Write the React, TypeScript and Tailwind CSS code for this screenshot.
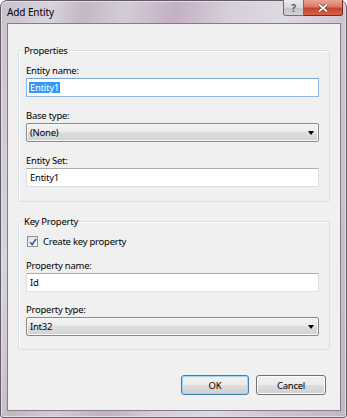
import React from 'react';

const font = "font-['Noto_Sans','Open_Sans',sans-serif] text-[9.5px] leading-[13px] tracking-[-0.25px] text-black";

function TextBox({ value, focused, selected }: { value: string; focused?: boolean; selected?: boolean }) {
  return (
    <div
      className={`h-[19px] flex items-center pl-[2px] bg-white border ${
        focused
          ? 'border-[#8fb8e2] border-t-[#7aa7d6]'
          : 'border-[#dcdfe3] border-t-[#abadb3]'
      }`}
    >
      {selected ? (
        <span className="bg-[#3399ff] text-white px-[1px] leading-[11px]">{value}</span>
      ) : (
        <span className="px-[1px]">{value}</span>
      )}
    </div>
  );
}

function ComboBox({ value }: { value: string }) {
  return (
    <div className="h-[19px] flex items-center justify-between pl-[3px] pr-[4px] rounded-[2px] border border-[#8a8a8a] bg-[linear-gradient(180deg,#f4f4f4_0%,#ebebeb_45%,#dddddd_50%,#d2d2d2_100%)] shadow-[inset_0_0_0_1px_#f8f8f8]">
      <span>{value}</span>
      <svg width="6" height="4" viewBox="0 0 6 4">
        <path d="M0 0h6L3 4z" fill="#000" />
      </svg>
    </div>
  );
}

function Field({ label, children, className = '' }: { label: string; children: React.ReactNode; className?: string }) {
  return (
    <div className={className}>
      <div className="mb-[1px]">{label}</div>
      {children}
    </div>
  );
}

function GroupBox({ title, children, className = '' }: { title: string; children: React.ReactNode; className?: string }) {
  return (
    <div className={`relative rounded-[3px] border border-[#d5dfe5] shadow-[inset_1px_1px_0_#ffffff] ${className}`}>
      <span className="absolute -top-[7px] left-[4px] px-[1px] bg-[#f0f0f0]">{title}</span>
      {children}
    </div>
  );
}

function Button({ label, isDefault, width }: { label: string; isDefault?: boolean; width: string }) {
  return (
    <button
      className={`${width} h-[20px] rounded-[3px] border ${
        isDefault ? 'border-[#3c7fb1] shadow-[inset_0_0_0_1px_#9fd5f3]' : 'border-[#707070] shadow-[inset_0_0_0_1px_#fcfcfc]'
      } bg-[linear-gradient(180deg,#f2f2f2_0%,#ebebeb_48%,#dddddd_52%,#cfcfcf_100%)] flex items-center justify-center`}
    >
      {label}
    </button>
  );
}

export default function App() {
  return (
    <div className={`w-[347px] h-[418px] ${font}`}>
      <div className="w-full h-full flex flex-col pl-[6px] pr-[5px] pb-[6px] rounded-t-[7px] rounded-b-[3px] border border-[#625c68] bg-[linear-gradient(100deg,#c9c1cc_0%,#d9d4db_12%,#c3b8c6_20%,#d3ccd6_30%,#c4afc6_42%,#d6cfd8_55%,#dfd9e1_68%,#cfc6d2_82%,#c2b7c5_100%)] shadow-[inset_0_0_0_1px_#e3dee6]">
        <div className="h-[22px] flex items-start">
          <span className="self-center text-[10px] pt-[1px] tracking-[-0.1px]">Add Entity</span>
          <div className="flex-1" />
          <div className="flex -mt-[1px] -mr-[2px]">
            <div className="w-[21px] h-[16px] rounded-bl-[3px] border border-[#6f6d75] border-t-0 bg-[linear-gradient(180deg,#eceaee_0%,#d9d7dd_50%,#c5c3ca_55%,#d4d2d8_100%)] flex items-center justify-center text-[10px] font-bold text-[#5b5a60] leading-none">
              ?
            </div>
            <div className="w-[39px] h-[16px] rounded-br-[3px] border border-[#6e2d26] border-t-0 border-l-0 bg-[linear-gradient(180deg,#e9a697_0%,#d97a66_45%,#c8432e_55%,#d6614a_100%)] flex items-center justify-center">
              <svg width="10" height="8" viewBox="0 0 10 8">
                <path d="M1 0.5L9 7.5M9 0.5L1 7.5" stroke="#5a2a24" strokeWidth="3" />
                <path d="M1 0.5L9 7.5M9 0.5L1 7.5" stroke="#ffffff" strokeWidth="1.8" />
              </svg>
            </div>
          </div>
        </div>

        <div className="flex-1 flex flex-col bg-[#f0f0f0] border border-[#857c89]">
          <GroupBox title="Properties" className="mx-[10px] mt-[26px] pt-[13px] pl-[7px] pr-[10px] pb-[14px]">
            <Field label="Entity name:">
              <TextBox value="Entity1" focused selected />
            </Field>
            <Field label="Base type:" className="mt-[12px]">
              <ComboBox value="(None)" />
            </Field>
            <Field label="Entity Set:" className="mt-[12px]">
              <TextBox value="Entity1" />
            </Field>
          </GroupBox>

          <GroupBox title="Key Property" className="mx-[10px] mt-[19px] pt-[13px] pl-[7px] pr-[10px] pb-[13px]">
            <div className="h-[13px] flex items-center gap-[5px] pl-[1px]">
              <div className="w-[11px] h-[11px] border border-[#8e8f8f] bg-[linear-gradient(135deg,#dde6f1,#f4f7fb)] flex items-center justify-center">
                <svg width="8" height="8" viewBox="0 0 8 8">
                  <path d="M1 4.2L3.2 6.5L7 1" stroke="#3f5a8c" strokeWidth="1.6" fill="none" />
                </svg>
              </div>
              <span>Create key property</span>
            </div>
            <Field label="Property name:" className="mt-[11px]">
              <TextBox value="Id" />
            </Field>
            <Field label="Property type:" className="mt-[11px]">
              <ComboBox value="Int32" />
            </Field>
          </GroupBox>

          <div className="mt-[25px] mr-[14px] flex justify-end gap-[7px]">
            <Button label="OK" isDefault width="w-[68px]" />
            <Button label="Cancel" width="w-[70px]" />
          </div>
        </div>
      </div>
    </div>
  );
}
